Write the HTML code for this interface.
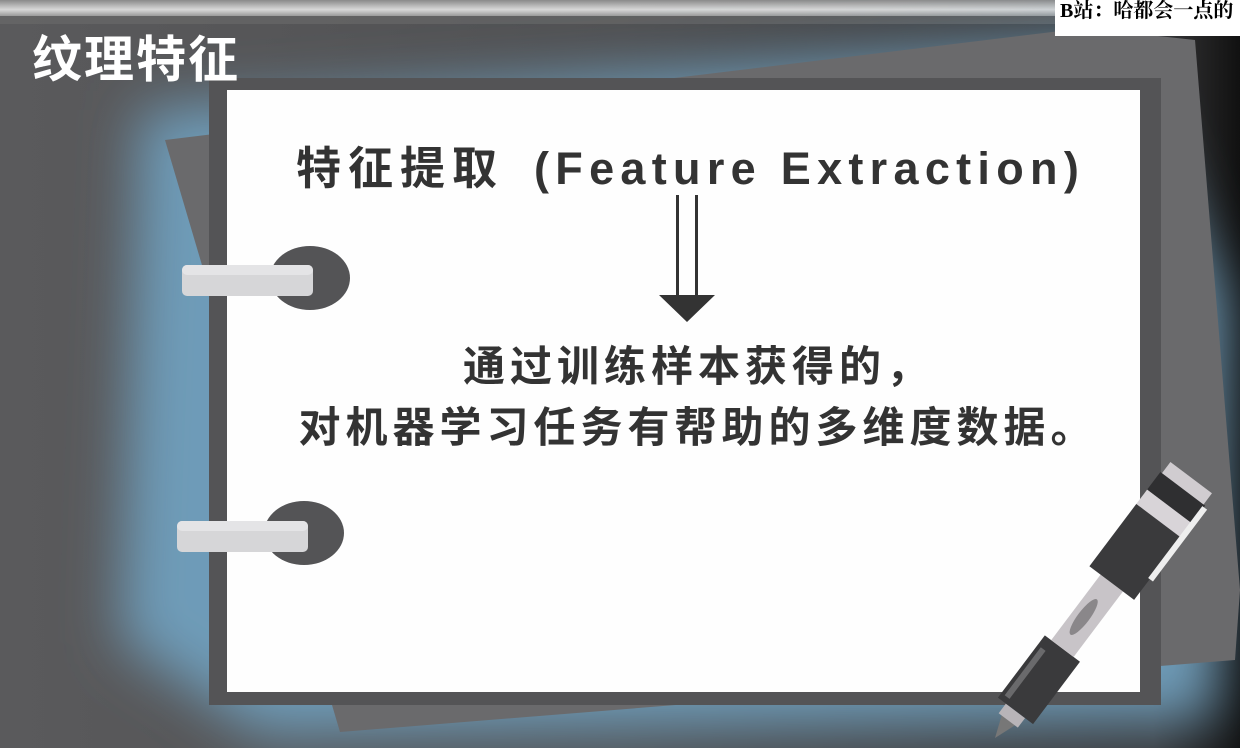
<!DOCTYPE html>
<html><head><meta charset="utf-8"><style>
body{margin:0;width:1240px;height:748px;overflow:hidden;background:#4a4a4c;position:relative;font-family:"Liberation Sans","Noto Sans CJK SC",sans-serif}
.abs{position:absolute}
</style></head><body>
<svg class="abs" style="left:0;top:0" width="1240" height="748">
<defs>
<linearGradient id="top" x1="0" y1="0" x2="0" y2="1"><stop offset="0" stop-color="#8a8a8a"/><stop offset="0.6" stop-color="#d8d8d8"/><stop offset="1" stop-color="#9a9a9a"/></linearGradient>
<linearGradient id="bg" x1="0" y1="0" x2="1" y2="0"><stop offset="0" stop-color="#5a5a5c"/><stop offset="0.5" stop-color="#505052"/><stop offset="0.93" stop-color="#3a3a3c"/><stop offset="1" stop-color="#111"/></linearGradient>
<filter id="blur" x="-20%" y="-20%" width="140%" height="140%"><feGaussianBlur stdDeviation="28"/></filter>
</defs>
<rect width="1240" height="748" fill="url(#bg)"/>
<rect x="0" y="0" width="1240" height="16" fill="url(#top)"/>
<rect x="0" y="16" width="1240" height="8" fill="#6a6a6a" opacity="0.6"/>
<path d="M140 110 L1110 40 L1225 300 L1215 720 L260 735 L120 640 Z" fill="#6e9bb8" filter="url(#blur)"/>
<path d="M165 140 L1085 28 L1195 40 L1240 590 L1235 660 L340 732 Z" fill="#6a6a6c"/>
<rect x="209" y="78" width="952" height="627" fill="#545456"/>
<rect x="227" y="90" width="913" height="602" fill="#fefefe"/>
<ellipse cx="310" cy="278" rx="40" ry="32" fill="#545456"/>
<rect x="182" y="265" width="131" height="31" rx="5" fill="#d6d6d8"/>
<rect x="182" y="265" width="131" height="10" rx="5" fill="#e4e4e6"/>
<ellipse cx="304" cy="533" rx="40" ry="32" fill="#545456"/>
<rect x="177" y="521" width="131" height="31" rx="5" fill="#d6d6d8"/>
<rect x="177" y="521" width="131" height="10" rx="5" fill="#e4e4e6"/>
<rect x="676" y="195" width="3" height="102" fill="#333"/>
<rect x="695" y="195" width="3" height="102" fill="#333"/>
<path d="M659 295 L715 295 L687 322 Z" fill="#333"/>
<g transform="translate(995,738) rotate(-53)">
<path d="M0 0 L24 -9 L24 9 Z" fill="#777"/>
<rect x="22" y="-12" width="12" height="24" fill="#b8b4b8"/>
<rect x="34" y="-22" width="78" height="44" fill="#3a3a3c"/>
<rect x="40" y="-18" width="60" height="6" fill="#6a6a6c"/>
<rect x="112" y="-14" width="82" height="28" fill="#c8c4c8"/>
<ellipse cx="150" cy="-2" rx="22" ry="6" fill="#8a878a"/>
<rect x="194" y="-28" width="78" height="56" fill="#3a3a3c"/>
<rect x="272" y="-28" width="18" height="56" fill="#d8d4d8"/>
<rect x="290" y="-28" width="22" height="56" fill="#2f2f31"/>
<rect x="312" y="-26" width="14" height="52" fill="#d0ccd0"/>
<rect x="220" y="26" width="90" height="6" fill="#eee"/>
</g>
</svg>
<div class="abs" style="left:32px;top:20px;font-size:50px;font-weight:bold;color:#fff;letter-spacing:2px;white-space:nowrap">纹理特征</div>
<div class="abs" style="left:1055px;top:0;width:185px;height:36px;background:#fff;font-size:20px;line-height:22px;color:#000;white-space:nowrap;overflow:hidden;font-weight:bold;font-family:'Liberation Serif','Noto Serif CJK SC',serif">&nbsp;B站：哈都会一点的</div>
<div class="abs" style="left:296px;top:132px;width:900px;font-size:45px;font-weight:bold;color:#333;white-space:nowrap;letter-spacing:7px">特征提取<span style="letter-spacing:6.3px;margin-left:30px">(Feature Extraction)</span></div>
<div class="abs" style="left:240px;top:336px;width:916px;text-align:center;font-size:42px;font-weight:bold;color:#333;line-height:61px;letter-spacing:5px;white-space:nowrap">通过训练样本获得的，<br>对机器学习任务有帮助的多维度数据。</div>
</body></html>
